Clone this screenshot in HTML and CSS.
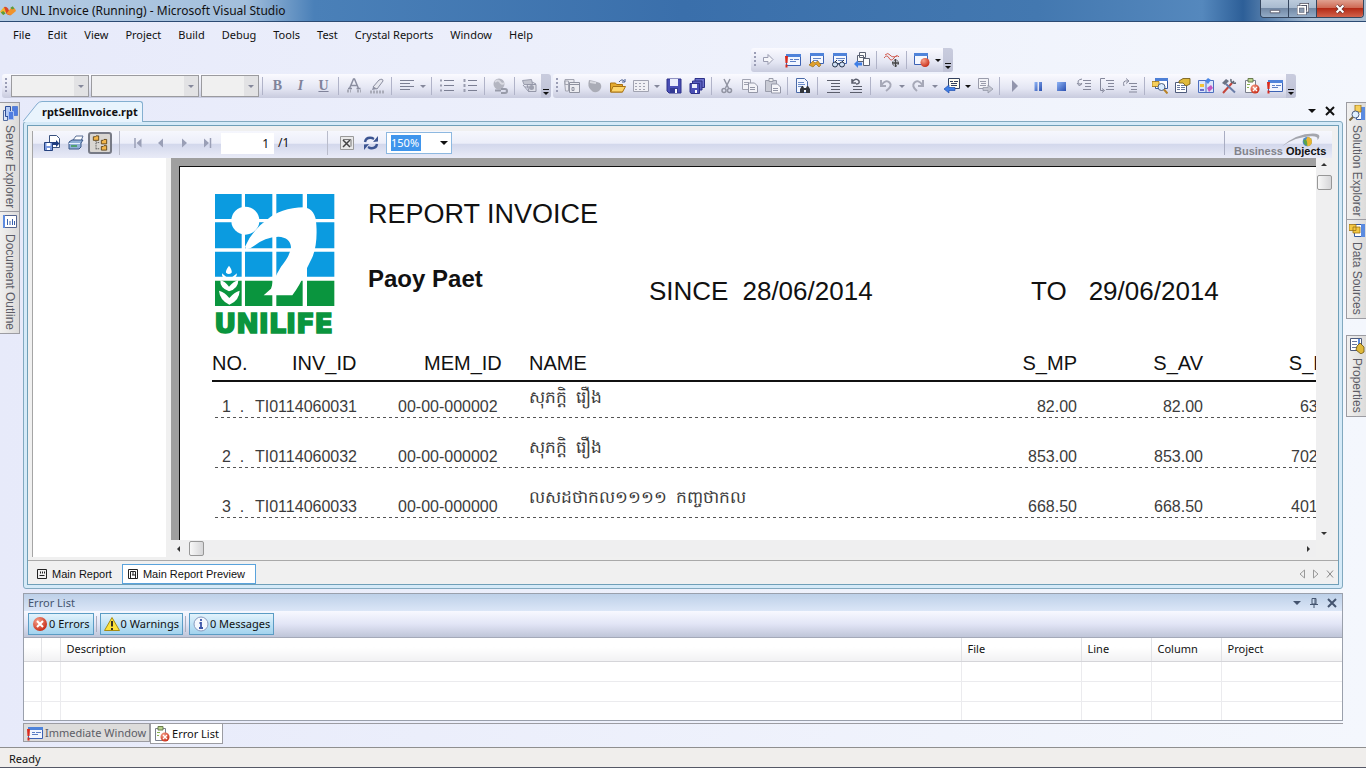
FILE: index.html
```html
<!DOCTYPE html>
<html lang="en">
<head>
    <meta charset="utf-8">
    <title>UNL Invoice (Running) - Microsoft Visual Studio</title>
    <link rel="stylesheet" href="styles.css">
</head>
<body>
    <!-- icon sprite -->
    <svg class="sprite" aria-hidden="true">
        <defs>
            <linearGradient id="gBlue" x1="0" y1="0" x2="1" y2="1"><stop offset="0" stop-color="#8fb4f5"/><stop offset="1" stop-color="#2a4fb0"/></linearGradient>
            <radialGradient id="gRed" cx=".35" cy=".3" r=".8"><stop offset="0" stop-color="#f6a08a"/><stop offset="1" stop-color="#c3220c"/></radialGradient>
        </defs>
        <symbol id="i-fore" viewBox="0 0 16 16"><path d="M1 13h4M11 13h4" stroke="#a9abb8" stroke-width="3" stroke-dasharray="2 1"/><path d="M3.500 10.500L7.500 1h1l4 9.500M5 7.500h6M2 10.500h4M10.500 10.500h4" fill="none" stroke="#8b8ea0" stroke-width="1.500"/></symbol>
        <symbol id="i-pen" viewBox="0 0 16 16"><path d="M1 14h14" stroke="#a9abb8" stroke-width="3" stroke-dasharray="2 1"/><path d="M4 9l6-7q4-2 4 1L8 11z" fill="#e6e7ef" stroke="#8b8ea0"/><path d="M4 9l4 2-5 1z" fill="#8b8ea0"/></symbol>
        <symbol id="i-align" viewBox="0 0 16 16"><path d="M1 2.500h14M1 5.500h10M1 8.500h14M1 11.500h10" stroke="#7b7f93" stroke-width="1"/></symbol>
        <symbol id="i-list" viewBox="0 0 16 16"><path d="M5 2.500h10M5 7.500h10M5 12.500h10" stroke="#7b7f93"/><path d="M1 2.500h2M1 7.500h2M1 12.500h2" stroke="#9a9db0" stroke-width="2"/></symbol>
        <symbol id="i-nums" viewBox="0 0 16 16"><path d="M6 2.500h9M6 7.500h9M6 12.500h9" stroke="#7b7f93"/><path d="M2.500 1v14" stroke="#9a9db0" stroke-width="2" stroke-dasharray="3 2"/></symbol>
        <symbol id="i-globe" viewBox="0 0 16 16"><circle cx="7" cy="6" r="5.500" fill="#b4b6c1"/><path d="M3 4q3-3 5 0t4 1" stroke="#d9dae2" fill="none" stroke-width="2"/><path d="M3 12.500h6M9 11h4a2 2 0 010 4h-4" fill="none" stroke="#989ba9" stroke-width="2"/></symbol>
        <symbol id="i-stack" viewBox="0 0 16 16"><path d="M.5 2.500l9-1 1 5H2z" fill="#c3c5d0" stroke="#9b9eae"/><path d="M1 7l6 7M5 6.500h9v7H7z" fill="#dddfe8" stroke="#9497a8"/><path d="M10 4l4 2M3 9h4" stroke="#9497a8"/><circle cx="9.500" cy="9.500" r="2.500" fill="#9ea1b0"/></symbol>
        <symbol id="i-newproj" viewBox="0 0 16 16"><path d="M1 1.500h9v5H1zM.5 3h4v10h-3z" fill="#e9e9ef" stroke="#a3a5b1"/><path d="M5.500 4.500h10v10h-10zM5.500 6.500h10M8 9.500h2v3H8z" fill="#ececf1" stroke="#8f929f"/></symbol>
        <symbol id="i-ball" viewBox="0 0 16 16"><path d="M2 2l5 1 6 2q3 4-1 8-5 3-8-1-4-3-2-10z" fill="#aaacb6"/><path d="M3 4l6 1" stroke="#d9dae1" stroke-width="2"/></symbol>
        <symbol id="i-open" viewBox="0 0 16 16"><path d="M.5 14V5h5l1 1.500h6V14z" fill="#e4a92d" stroke="#a87212"/><path d="M3 8.500h12.500L12.500 14H.7z" fill="#fdd56b" stroke="#a87212"/><path d="M9 4q3-4 5.500-.5M15 1v3h-3" fill="none" stroke="#44598c"/></symbol>
        <symbol id="i-grid" viewBox="0 0 16 16"><path d="M.5 2.500h15v11H.5z" fill="#f0f0f5" stroke="#a1a3b1"/><path d="M2 5.500h12M2 8.500h12M2 11.500h12" stroke="#a1a3b1" stroke-dasharray="2 2"/></symbol>
        <symbol id="i-save" viewBox="0 0 16 16"><path d="M1 1h14v14H3l-2-2z" fill="#4a4fb5" stroke="#2d3188"/><path d="M4 1h8v7H4z" fill="#e9ecfb"/><path d="M4 10h8v5H4z" fill="#333a94"/><path d="M9 11h2v4H9z" fill="#fff"/></symbol>
        <symbol id="i-saveall" viewBox="0 0 16 16"><path d="M6 .5h9.500v9H6z" fill="#6b70cc" stroke="#2d3188"/><path d="M3.500 3h9.500v9H3.500z" fill="#5a5fc0" stroke="#2d3188"/><path d="M1 5.500h9.500v10H2L1 14z" fill="#4a4fb5" stroke="#2d3188"/><path d="M3 6h5v4H3z" fill="#e9ecfb"/><path d="M6 12h2v3H6z" fill="#fff"/></symbol>
        <symbol id="i-cut" viewBox="0 0 16 16"><path d="M5 1l4.500 9M11 1L6.500 10" stroke="#9194a2" stroke-width="1.500"/><circle cx="5" cy="12.500" r="2" fill="none" stroke="#9194a2" stroke-width="1.500"/><circle cx="10.500" cy="12.500" r="2" fill="none" stroke="#9194a2" stroke-width="1.500"/></symbol>
        <symbol id="i-copy" viewBox="0 0 16 16"><path d="M.5 1.500h8v10h-8zM2 4.500h5M2 6.500h5" fill="#f3f3f8" stroke="#a1a3b1"/><path d="M6.500 5h6l3 3v6.500h-9zM8 9.500h5M8 11.500h5" fill="#f3f3f8" stroke="#9497a7"/></symbol>
        <symbol id="i-paste" viewBox="0 0 16 16"><path d="M.5 2.500h11v11H.5z" fill="#c9cbd5" stroke="#9a9dab"/><path d="M4 .5h4v3H4z" fill="#eee" stroke="#9a9dab"/><path d="M6.500 6h6l3 3v6h-9zM8 10.500h5M8 12.500h5" fill="#f5f5f9" stroke="#9497a7"/></symbol>
        <symbol id="i-find" viewBox="0 0 16 16"><path d="M1.500.5h8l3 3v11h-11z" fill="#f3f7ff" stroke="#4b6aa8"/><path d="M3 4.500h6M3 6.500h7M3 8.500h4" stroke="#6d8cc8"/><path d="M5 15v-4l2-3h1l1 2h2l1-2h1l2 3v4h-4v-3H9v3z" fill="#33363c"/></symbol>
        <symbol id="i-indent" viewBox="0 0 16 16"><path d="M2 2.500h13M6 5.500h9M6 8.500h9M6 11.500h9M2 14.500h13" stroke="#5b5e6c"/></symbol>
        <symbol id="i-uncomm" viewBox="0 0 16 16"><path d="M5 8.500h9M5 11.500h9M2 14.500h12" stroke="#5b5e6c"/><path d="M4 1v4h4M4 4q4-5 7-1 1 3-3 3" fill="none" stroke="#5b5e6c" stroke-width="1.500"/></symbol>
        <symbol id="i-undo" viewBox="0 0 16 16"><path d="M3 2v6h5M3.500 7Q8 1 11.500 4.500T8 13" fill="none" stroke="#a7a9b8" stroke-width="2"/></symbol>
        <symbol id="i-redo" viewBox="0 0 16 16"><path d="M12 2v6H7M11.500 7Q7 1 3.500 4.500T6 13" fill="none" stroke="#a7a9b8" stroke-width="2"/></symbol>
        <symbol id="i-back" viewBox="0 0 16 16"><path d="M4.500.5h11v10h-11z" fill="#fffdf0" stroke="#33415f"/><path d="M6 3.500h3M10 3.500h4M7 5.500h6M7 7.500h6" stroke="#33415f"/><path d="M0 11l5-4v2.500h6v3H5V15z" fill="#3f7fe6" stroke="#1f4faf" stroke-width=".7"/></symbol>
        <symbol id="i-fwd" viewBox="0 0 16 16"><path d="M1.500.5h10v10h-10z" fill="#f2f2f6" stroke="#9a9cab"/><path d="M3 3.500h6M4 5.500h5M3 7.500h6" stroke="#9a9cab"/><path d="M16 11l-5-4v2.500H6v3h5V15z" fill="#c3c5d0" stroke="#8d90a0" stroke-width=".7"/></symbol>
        <symbol id="i-play" viewBox="0 0 16 16"><path d="M5 2l6 6-6 6z" fill="#9295ac"/></symbol>
        <symbol id="i-pause" viewBox="0 0 16 16"><path d="M4.500 4h3v9h-3zM9 4h3v9H9z" fill="url(#gBlue)"/></symbol>
        <symbol id="i-stop" viewBox="0 0 16 16"><path d="M4 4h9v9H4z" fill="url(#gBlue)"/></symbol>
        <symbol id="i-into" viewBox="0 0 16 16"><path d="M7 2.500h8M9 5.500h6M9 8.500h6M7 11.500h8" stroke="#85889b"/><path d="M6 1q-6 1-3 5M1 5l2.500 3L6 5M3 6h3" fill="none" stroke="#85889b"/></symbol>
        <symbol id="i-over" viewBox="0 0 16 16"><path d="M7 2.500h8M9 5.500h6M9 8.500h6M7 11.500h8" stroke="#85889b"/><path d="M6 .5H1.500v12h3M3 10.500l2.500 2-2.500 2" fill="none" stroke="#85889b"/></symbol>
        <symbol id="i-out" viewBox="0 0 16 16"><path d="M7 5.500h8M9 8.500h6M9 11.500h6M7 14h8" stroke="#85889b"/><path d="M2 8Q0 2 6 3M4 .5L7 3 4 5.500" fill="none" stroke="#85889b"/></symbol>
        <symbol id="i-solexp" viewBox="0 0 16 16"><path d="M3.500.5h12v10h-12z" fill="#fff" stroke="#34599f"/><path d="M3 0h13v3H3z" fill="#4d7fd6"/><path d="M0 3.500h7v5H0z" fill="#f6cf5a" stroke="#9d7213" stroke-width=".8"/><circle cx="9.500" cy="9" r="3.500" fill="#d8ecff" stroke="#4d5f80"/><path d="M12 11.500l3.500 4" stroke="#b98327" stroke-width="2"/></symbol>
        <symbol id="i-solside" viewBox="0 0 16 16"><path d="M7.500 2.500h8v12h-8z" fill="#fff" stroke="#34599f"/><path d="M12 2h4v13h-4z" fill="#5b8be0"/><path d="M6 0h6v7H6z" fill="#f6cf5a" stroke="#9d7213" stroke-width=".8"/><circle cx="6.500" cy="9.500" r="3.500" fill="#e0f0ff" stroke="#4d5f80"/><path d="M4 12l-3.500 3.500" stroke="#7d6a3f" stroke-width="2"/></symbol>
        <symbol id="i-props" viewBox="0 0 16 16"><path d="M.5 4.500h11v10H.5z" fill="#fff" stroke="#4e5b7b"/><path d="M2 7.500h3M6 7.500h4M2 9.500h3M6 9.500h4M2 11.500h3M6 11.500h4" stroke="#68779c"/><path d="M4 3l4-2.500h7V6L11 8 8 5H4z" fill="#e0b93b" stroke="#6b5310" stroke-width=".8"/></symbol>
        <symbol id="i-propside" viewBox="0 0 16 16"><path d="M1.500.5h11v12h-11z" fill="#fff" stroke="#4e5b7b"/><path d="M3 3.500h5M3 6.500h5M3 9.500h5" stroke="#68779c"/><path d="M10 1v11" stroke="#5b8be0" stroke-width="2"/><path d="M8 8l3-3 4 4v5l-3 2-5-4z" fill="#e0b93b" stroke="#6b5310" stroke-width=".8"/></symbol>
        <symbol id="i-objb" viewBox="0 0 16 16"><path d="M.5 2.500h15v12H.5z" fill="#dbe6fb" stroke="#4d6fbf"/><path d="M8 3v11" stroke="#4d6fbf"/><path d="M10 0l3 2-3 4-3-3z" fill="#4a86e4"/><path d="M2 6h4v3H2z" fill="#f2c338"/><path d="M9 10l4-3 2 3-4 4z" fill="#c657c0"/><path d="M2 11h4v2H2z" fill="#6a6fc9"/></symbol>
        <symbol id="i-tools" viewBox="0 0 16 16"><path d="M2 15L11 5" stroke="#c4453b" stroke-width="2"/><path d="M10 1q-1 5 5 4M11 5l2-2" stroke="#5a6270" fill="none" stroke-width="1.500"/><path d="M5 6l9 8.500" stroke="#6a7da8" stroke-width="2"/><path d="M1 5l4-4 3 2-4 4z" fill="#6b7384"/></symbol>
        <symbol id="i-errlist" viewBox="0 0 16 16"><path d="M1.500 2.500h10v12h-10z" fill="#fdfdfa" stroke="#7a7f8d"/><path d="M4 .5h5v3.500H4z" fill="#b9d48c" stroke="#6b7c50"/><path d="M3 6.500h3M3 9.500h2" stroke="#88b052"/><circle cx="11" cy="11" r="4.500" fill="url(#gRed)"/><path d="M9 9l4 4M13 9l-4 4" stroke="#fff" stroke-width="1.300"/></symbol>
        <symbol id="i-imm" viewBox="0 0 16 16"><path d="M1.500 2.500h14v11h-14z" fill="#f2f6ff" stroke="#3c62b4"/><path d="M1 2h15v3H1z" fill="#4f83da"/><path d="M5 7.500h3M9 7.500h5M5 9.500h6" stroke="#5c7fc5"/><path d="M0 4h3l-.5 7h-2zM.5 12.500h2v3h-2z" fill="#d92a1c"/></symbol>
        <symbol id="i-win" viewBox="0 0 16 16"><path d="M2.500 1.500h13v10h-13z" fill="#f5f8ff" stroke="#3c62b4"/><path d="M2 1h14v3H2z" fill="#4f83da"/><path d="M5 6.500h8M5 8.500h5" stroke="#6686c5"/><path d="M1 13l4-4 2 2 3-2 3 4-2 2-3-3-3 3z" fill="#e0a02c" stroke="#8a6316" stroke-width=".6"/></symbol>
        <symbol id="i-watch" viewBox="0 0 16 16"><path d="M2.500 1.500h13v10h-13z" fill="#f5f8ff" stroke="#3c62b4"/><path d="M2 1h14v3H2z" fill="#4f83da"/><path d="M5 6.500h9M7 8.500h6" stroke="#6686c5"/><circle cx="4" cy="12.500" r="2.500" fill="#cfe0f5" stroke="#26324a"/><circle cx="11" cy="12.500" r="2.500" fill="#cfe0f5" stroke="#26324a"/><path d="M4 10l2-2M11 10l2-2M6.500 12h2" stroke="#26324a"/></symbol>
        <symbol id="i-callstk" viewBox="0 0 16 16"><path d="M5.500.5h6v5h-6zM9.500 6.500h6v7h-6zM3.500 3.500h6v6h-6z" fill="#fcfcfc" stroke="#5b6274"/><path d="M0 12l4-4v2.500h4v3H4V16z" fill="#3f7fe6"/></symbol>
        <symbol id="i-next" viewBox="0 0 16 16"><path d="M1.500 5.500v4H6v3l5-5-5-5v3z" fill="#f6f6fa" stroke="#9a9cb0"/></symbol>
        <symbol id="i-wave" viewBox="0 0 16 16"><path d="M0 6q3-4 5 0t5 0 5-1M1 3q3-3 5 0t7 1" fill="none" stroke="#d0574b"/><circle cx="11.500" cy="11" r="3" fill="none" stroke="#444" stroke-dasharray="2 1"/><path d="M11.500 7v8M8 11h7" stroke="#444" stroke-width="1.500"/></symbol>
        <symbol id="i-brk" viewBox="0 0 16 16"><path d="M.5 1.500h13v11H.5z" fill="#f5f8ff" stroke="#3c62b4"/><path d="M0 1h14v3H0z" fill="#4f83da"/><circle cx="11" cy="10.500" r="4.500" fill="url(#gRed)"/></symbol>
        <symbol id="i-servers" viewBox="0 0 16 16"><path d="M1.500 5.500h4v10h-4z" fill="#dce6f8" stroke="#516b9f"/><path d="M3.500 1.500h5v10h-5z" fill="#b4cbf5" stroke="#2c4c97"/><path d="M10.500 1.500h5v9h-5z" fill="#4f7ce0" stroke="#5b80d0"/><path d="M6.500 6.500h5v8h-5z" fill="#4f7ce0" stroke="#a9c1f2"/></symbol>
        <symbol id="i-outline" viewBox="0 0 16 16"><path d="M1.500 1.500h13v12h-13z" fill="#fff" stroke="#55658f"/><path d="M1 1h2v13H1z" fill="#5d8be0"/><path d="M5.500 5v6M8 7v4M10.500 5v6M12.500 7v4" stroke="#3a62ad"/></symbol>
        <symbol id="i-dsrc" viewBox="0 0 16 16"><path d="M5.500 2.500h10v12h-10z" fill="#fff" stroke="#34599f"/><path d="M12 2h4v13h-4z" fill="#5b8be0"/><path d="M0 2.500h7v6H0zM4 5h7v6H4z" fill="#f3c843" stroke="#9d7213" stroke-width=".8"/></symbol>
        <symbol id="i-export" viewBox="0 0 16 16"><path d="M5.500.5h7l3 3v9h-10z" fill="#fff" stroke="#39527f"/><path d="M8 7h4V5l3.500 3.500L12 12v-2H8z" fill="#1e3c80"/><path d="M.5 7.500h8v8h-8z" fill="#7c9be0" stroke="#24417e"/><path d="M2.500 8h4v3h-4z" fill="#fff"/><path d="M3 13h3v2H3z" fill="#fff"/></symbol>
        <symbol id="i-print" viewBox="0 0 16 16"><path d="M5 5l3-4h7l-2 5z" fill="#fff" stroke="#5a6f96"/><path d="M1 7l3-2h11l-2 3v4l-2 2H1z" fill="#8fb0d8" stroke="#3a5687"/><path d="M1 8.500h11" stroke="#e7f1ff"/><path d="M3 11h6" stroke="#3b9a52" stroke-width="1.500"/></symbol>
        <symbol id="i-tree" viewBox="0 0 18 18"><path d="M4.500 7v9M5 8.500h4M5 15.500h4" stroke="#333" stroke-dasharray="1 1"/><path d="M1.500 2h2l1-1h3v5h-6zM10.500 6h2l1-1h3v5h-6zM10.500 13h2l1-1h3v5h-6z" fill="#f2b64c" stroke="#5b4013"/></symbol>
        <symbol id="i-first" viewBox="0 0 16 16"><path d="M4 3v10" stroke="#9a9fb6" stroke-width="1.500"/><path d="M10.500 3.500v9L5.500 8z" fill="#9a9fb6"/></symbol>
        <symbol id="i-prev" viewBox="0 0 16 16"><path d="M9 3.500v9L4 8z" fill="#9a9fb6"/></symbol>
        <symbol id="i-nextp" viewBox="0 0 16 16"><path d="M5 3.500v9L10 8z" fill="#9a9fb6"/></symbol>
        <symbol id="i-last" viewBox="0 0 16 16"><path d="M10.500 3v10" stroke="#9a9fb6" stroke-width="1.500"/><path d="M4 3.500v9l5-4.500z" fill="#9a9fb6"/></symbol>
        <symbol id="i-closev" viewBox="0 0 16 16"><path d="M1.500 1.500h13v13h-13z" fill="#e9e9e9" stroke="#999"/><path d="M4 5l7 7M11 5l-7 7" stroke="#444" stroke-width="1.500"/><path d="M4 4.500h8v7" fill="none" stroke="#777"/></symbol>
        <symbol id="i-refresh" viewBox="0 0 16 16"><path d="M2 7Q3 2 9 3l2 1M14 9q-1 5-7 4l-2-1" fill="none" stroke="#3c5591" stroke-width="2.500"/><path d="M10 7l5-.5V1zM6 9l-5 .5V15z" fill="#3c5591"/></symbol>
        <symbol id="i-design" viewBox="0 0 10 10"><path d="M.5.5h9v9h-9zM3.500 2.500v2M5.500 2.500v2M7.500 2.500v2M2.500 6.500h5" fill="none" stroke="#222"/></symbol>
        <symbol id="i-preview" viewBox="0 0 10 10"><path d="M.5.5h9v9h-9zM2.500 9V2.500h5V9M5 3v3M4 6h3" fill="none" stroke="#222"/></symbol>
        <symbol id="i-x" viewBox="0 0 10 10"><path d="M1 1l8 8M9 1L1 9" fill="none" stroke="currentColor" stroke-width="2"/></symbol>
        <symbol id="i-xthin" viewBox="0 0 10 10"><path d="M2 1.500l6 7M8 1.500l-6 7" fill="none" stroke="currentColor"/></symbol>
        <symbol id="i-pin" viewBox="0 0 10 10"><path d="M3 .5h4V6H3zM6 1v5M1 6.500h8M5 7v3" fill="none" stroke="currentColor"/></symbol>
    </svg>

    <header class="titlebar">
        <svg class="vs-logo" viewBox="0 0 20 16"><path d="M0 9l5-6q3 0 5 3l-6 7z" fill="#f2b52c"/><path d="M5 3q3-1 5 2l4 8q-4 1-6-2z" fill="#d8442a"/><path d="M8 11l6-7q5-1 6 4l-6 5q-3 0-6-2z" fill="#f0932b"/><path d="M1 10l3-2 3 3-3 2zM13 4l3-2 2 3-3 1z" fill="#5a9c3d"/></svg>
        <h1>UNL Invoice (Running) - Microsoft Visual Studio</h1>
        <div class="win-buttons">
            <button class="win-min" aria-label="Minimize"><svg viewBox="0 0 14 14"><path d="M1.500 8.500h11v3h-11z" fill="#fff" stroke="#556"/></svg></button>
            <button class="win-restore" aria-label="Restore"><svg viewBox="0 0 14 14"><path d="M4.500 1.500h8v8h-8z" fill="#8c9bb0" stroke="#445" stroke-width="3"/><path d="M4.500 1.500h8v8h-8z" fill="none" stroke="#fff" stroke-width="1.500"/><path d="M1.500 4.500h8v8h-8z" fill="#8c9bb0" stroke="#445" stroke-width="3"/><path d="M1.500 4.500h8v8h-8z" fill="none" stroke="#fff" stroke-width="2"/></svg></button>
            <button class="win-close" aria-label="Close"><svg viewBox="0 0 14 14"><path d="M3 3l8 8M11 3l-8 8" stroke="#603030" stroke-width="4"/><path d="M3 3l8 8M11 3l-8 8" stroke="#fff" stroke-width="2.500"/></svg></button>
        </div>
    </header>

    <nav class="menubar">
        <a href="#">File</a>
        <a href="#">Edit</a>
        <a href="#">View</a>
        <a href="#">Project</a>
        <a href="#">Build</a>
        <a href="#">Debug</a>
        <a href="#">Tools</a>
        <a href="#">Test</a>
        <a href="#">Crystal Reports</a>
        <a href="#">Window</a>
        <a href="#">Help</a>
    </nav>

    <div class="toolbar-row debug-row">
        <div class="toolbar">
            <span class="grip"></span>
            <button aria-label="Show Next Statement"><svg><use href="#i-next"/></svg></button>
            <button aria-label="Immediate"><svg><use href="#i-imm"/></svg></button>
            <button aria-label="Locals"><svg><use href="#i-win"/></svg></button>
            <button aria-label="Watch"><svg><use href="#i-watch"/></svg></button>
            <button aria-label="Call Stack"><svg><use href="#i-callstk"/></svg></button>
            <span class="sep"></span>
            <button aria-label="Threads"><svg><use href="#i-wave"/></svg></button>
            <span class="sep"></span>
            <button aria-label="Breakpoints"><svg><use href="#i-brk"/></svg></button>
            <button class="drop on" aria-label="More windows"></button>
            <button class="overflow" aria-label="Toolbar options"></button>
        </div>
    </div>

    <div class="toolbar-row">
        <div class="toolbar">
            <span class="grip"></span>
            <div class="combo combo-s"><select disabled aria-label="Target rule"></select></div>
            <div class="combo combo-l"><select disabled aria-label="Font name"></select></div>
            <div class="combo combo-xs"><select disabled aria-label="Font size"></select></div>
            <span class="sep"></span>
            <button class="fmt" disabled><b>B</b></button>
            <button class="fmt" disabled><i>I</i></button>
            <button class="fmt" disabled><u>U</u></button>
            <span class="sep"></span>
            <button aria-label="Foreground color"><svg><use href="#i-fore"/></svg></button>
            <button aria-label="Background color"><svg><use href="#i-pen"/></svg></button>
            <span class="sep"></span>
            <button aria-label="Align"><svg><use href="#i-align"/></svg></button>
            <button class="drop" aria-label="Align options"></button>
            <span class="sep"></span>
            <button aria-label="Bullets"><svg><use href="#i-list"/></svg></button>
            <button aria-label="Numbering"><svg><use href="#i-nums"/></svg></button>
            <span class="sep"></span>
            <button aria-label="Hyperlink"><svg><use href="#i-globe"/></svg></button>
            <span class="sep"></span>
            <button aria-label="Style"><svg><use href="#i-stack"/></svg></button>
            <button class="overflow" aria-label="Toolbar options"></button>
        </div>
        <div class="toolbar">
            <span class="grip"></span>
            <button aria-label="New Project"><svg><use href="#i-newproj"/></svg></button>
            <button aria-label="New Web Site"><svg><use href="#i-ball"/></svg></button>
            <button aria-label="Open File"><svg><use href="#i-open"/></svg></button>
            <button aria-label="Add New Item"><svg><use href="#i-grid"/></svg></button>
            <button class="drop" aria-label="Add options"></button>
            <button aria-label="Save"><svg><use href="#i-save"/></svg></button>
            <button aria-label="Save All"><svg><use href="#i-saveall"/></svg></button>
            <span class="sep"></span>
            <button aria-label="Cut"><svg><use href="#i-cut"/></svg></button>
            <button aria-label="Copy"><svg><use href="#i-copy"/></svg></button>
            <button aria-label="Paste"><svg><use href="#i-paste"/></svg></button>
            <span class="sep"></span>
            <button aria-label="Find"><svg><use href="#i-find"/></svg></button>
            <span class="sep"></span>
            <button aria-label="Comment"><svg><use href="#i-indent"/></svg></button>
            <button aria-label="Uncomment"><svg><use href="#i-uncomm"/></svg></button>
            <span class="sep"></span>
            <button aria-label="Undo"><svg><use href="#i-undo"/></svg></button>
            <button class="drop" aria-label="Undo list"></button>
            <button aria-label="Redo"><svg><use href="#i-redo"/></svg></button>
            <button class="drop" aria-label="Redo list"></button>
            <button aria-label="Navigate Backward"><svg><use href="#i-back"/></svg></button>
            <button class="drop on" aria-label="Navigate list"></button>
            <button aria-label="Navigate Forward"><svg><use href="#i-fwd"/></svg></button>
            <span class="sep"></span>
            <button aria-label="Continue"><svg><use href="#i-play"/></svg></button>
            <button aria-label="Break All"><svg><use href="#i-pause"/></svg></button>
            <button aria-label="Stop"><svg><use href="#i-stop"/></svg></button>
            <button aria-label="Step Into"><svg><use href="#i-into"/></svg></button>
            <button aria-label="Step Over"><svg><use href="#i-over"/></svg></button>
            <button aria-label="Step Out"><svg><use href="#i-out"/></svg></button>
            <span class="sep"></span>
            <button aria-label="Solution Explorer"><svg><use href="#i-solexp"/></svg></button>
            <button aria-label="Properties"><svg><use href="#i-props"/></svg></button>
            <button aria-label="Object Browser"><svg><use href="#i-objb"/></svg></button>
            <button aria-label="Toolbox"><svg><use href="#i-tools"/></svg></button>
            <button aria-label="Error List"><svg><use href="#i-errlist"/></svg></button>
            <button aria-label="Immediate Window"><svg><use href="#i-imm"/></svg></button>
            <button class="overflow" aria-label="Toolbar options"></button>
        </div>
    </div>

    <div class="workspace">
        <aside class="dock dock-left">
            <button><svg><use href="#i-servers"/></svg>Server Explorer</button>
            <button><svg><use href="#i-outline"/></svg>Document Outline</button>
        </aside>

        <main class="center">
            <div class="doc-tabs">
                <button class="doc-tab">
                    <svg class="slant" viewBox="0 0 19 21"><path d="M0 21L15 3Q17 0 19 0V21z" fill="#e9f4fd"/><path d="M0 20.500L14 3Q16 .5 19 .5" fill="none" stroke="#84afd0"/></svg>
                    <span>rptSellInvoice.rpt</span>
                </button>
                <div class="doc-actions">
                    <button class="caret" aria-label="Active files"></button>
                    <button aria-label="Close"><svg><use href="#i-x"/></svg></button>
                </div>
            </div>

            <section class="doc-frame">
                <div class="doc-inner">
                    <div class="viewer">
                        <div class="viewer-bar">
                            <button aria-label="Export"><svg><use href="#i-export"/></svg></button>
                            <button aria-label="Print"><svg><use href="#i-print"/></svg></button>
                            <button class="pressed" aria-label="Group tree"><svg><use href="#i-tree"/></svg></button>
                            <span class="vsep"></span>
                            <button class="nav" aria-label="First page"><svg><use href="#i-first"/></svg></button>
                            <button class="nav" aria-label="Previous page"><svg><use href="#i-prev"/></svg></button>
                            <button class="nav" aria-label="Next page"><svg><use href="#i-nextp"/></svg></button>
                            <button class="nav" aria-label="Last page"><svg><use href="#i-last"/></svg></button>
                            <input class="page-no" type="text" value="1" aria-label="Page">
                            <span class="page-total">/1</span>
                            <span class="vsep"></span>
                            <button aria-label="Close view"><svg><use href="#i-closev"/></svg></button>
                            <button aria-label="Refresh"><svg><use href="#i-refresh"/></svg></button>
                            <div class="zoom-box">
                                <input type="text" value="150%" aria-label="Zoom">
                                <button class="caret" aria-label="Zoom levels"></button>
                            </div>
                            <div class="bo-logo">
                                <svg viewBox="0 0 60 21"><path d="M0 20Q24-1 51 1q9 2 2 10 2-7-10-6Q20 6 0 20z" fill="#a4a6ae"/><circle cx="38" cy="13" r="7" fill="#4a88c8"/><path d="M38 6a7 7 0 010 14q-5-5 0-14z" fill="#e8b530"/><path d="M32 11q6-5 6 8-5 0-6-8z" fill="#5aa54a"/></svg>
                                <span><i>Business</i> Objects</span>
                            </div>
                        </div>

                        <div class="viewer-body">
                            <div class="group-tree"></div>
                            <div class="scroller">
                                <div class="canvas">
                                    <article class="page">
                                        <div class="report-head">
                                            <svg class="unilife" viewBox="0 0 360 426">
                                                <path fill="#0b9be0" d="M0 0h80v75H0zM90 0h82v75H90zM184 0h79v75h-79zM276 0h82v75h-82zM0 85h80v78H0zM90 85h82v78H90zM184 85h79v78h-79zM276 85h82v78h-82zM0 173h80v75H0zM90 173h82v75H90zM184 173h79v75h-79zM276 173h82v75h-82z"/>
                                                <path fill="#0a953e" d="M0 260h80v76H0zM90 260h82v76H90zM184 260h79v76h-79zM276 260h82v76h-82z"/>
                                                <g fill="#fff">
                                                    <circle cx="91" cy="80" r="42"/>
                                                    <path d="M94 166L90 158Q112 108 155 78 195 42 268 40 302 46 304 92 308 150 292 190 276 222 263 250 257 270 232 304H146L168 284Q176 254 198 218 226 184 228 160 226 130 190 128 148 130 120 154 108 164 94 166z"/>
                                                    <path d="M42 215q-11 15-9 21 8 8 17 0 2-8-8-21zM21 238q-2 16 21 18 24-2 24-18l-13 10q-11 6-20 0zM16 258q-2 24 26 34 28-8 28-34-14 4-28 20-12-16-26-20zM12 290q2 28 31 42 30-12 31-42-16 4-31 22-14-18-31-22z"/>
                                                </g>
                                                <text x="-2" y="417">UNILIFE</text>
                                            </svg>
                                            <div class="report-title">
                                                <h2>REPORT INVOICE</h2>
                                                <h3>Paoy Paet</h3>
                                            </div>
                                            <div class="report-date since"><span>SINCE</span><span>28/06/2014</span></div>
                                            <div class="report-date to"><span>TO</span><span>29/06/2014</span></div>
                                        </div>

                                        <table class="report">
                                            <colgroup>
                                                <col class="c-no"><col class="c-inv"><col class="c-mem"><col class="c-name"><col class="c-mp"><col class="c-av"><col class="c-bv">
                                            </colgroup>
                                            <thead>
                                                <tr><th>NO.</th><th class="mid">INV_ID</th><th class="mem">MEM_ID</th><th>NAME</th><th class="num">S_MP</th><th class="num">S_AV</th><th class="num">S_BV</th></tr>
                                            </thead>
                                            <tbody>
                                                <tr><td class="no">1&nbsp; .</td><td>TI0114060031</td><td>00-00-000002</td><td class="name">សុភក្តិ&nbsp; រឿង</td><td class="num">82.00</td><td class="num">82.00</td><td class="num">63.00</td></tr>
                                                <tr><td class="no">2&nbsp; .</td><td>TI0114060032</td><td>00-00-000002</td><td class="name">សុភក្តិ&nbsp; រឿង</td><td class="num">853.00</td><td class="num">853.00</td><td class="num">702.00</td></tr>
                                                <tr><td class="no">3&nbsp; .</td><td>TI0114060033</td><td>00-00-000000</td><td class="name">លសដថាកល១១១១&nbsp; កញ្ចថាកល</td><td class="num">668.50</td><td class="num">668.50</td><td class="num">401.00</td></tr>
                                            </tbody>
                                        </table>
                                    </article>
                                </div>
                                <div class="vscroll"><span class="arr up"></span><span class="thumb"></span><span class="arr down"></span></div>
                                <div class="hscroll"><span class="arr left"></span><span class="thumb"></span><span class="arr right"></span></div>
                            </div>
                        </div>
                    </div>

                    <div class="view-tabs">
                        <button><svg><use href="#i-design"/></svg>Main Report</button>
                        <button class="active"><svg><use href="#i-preview"/></svg>Main Report Preview</button>
                        <div class="view-nav">
                            <svg viewBox="0 0 8 10"><path d="M6.500 1v8L2 5z" fill="none" stroke="#999"/></svg>
                            <svg viewBox="0 0 8 10"><path d="M1.500 1v8L6 5z" fill="none" stroke="#999"/></svg>
                            <svg viewBox="0 0 10 10"><use href="#i-xthin"/></svg>
                        </div>
                    </div>
                </div>
            </section>

            <section class="errors">
                <div class="errors-title">
                    <h2>Error List</h2>
                    <button class="caret" aria-label="Window position"></button>
                    <button aria-label="Auto Hide"><svg><use href="#i-pin"/></svg></button>
                    <button aria-label="Close"><svg><use href="#i-x"/></svg></button>
                </div>
                <div class="errors-bar">
                    <button><svg viewBox="0 0 16 16"><circle cx="8" cy="8" r="7" fill="url(#gRed)"/><path d="M5 5l6 6M11 5l-6 6" stroke="#fff" stroke-width="2"/></svg>0 Errors</button>
                    <span></span>
                    <button><svg viewBox="0 0 16 16"><path d="M8 1.500l7.500 13H.5z" fill="#fce23a" stroke="#a78b12"/><path d="M8 5v5.500M8 12v2" stroke="#222" stroke-width="1.800"/></svg>0 Warnings</button>
                    <span></span>
                    <button><svg viewBox="0 0 16 16"><circle cx="8" cy="8" r="7" fill="#f3f7fd" stroke="#8a9cc0"/><path d="M8 3v2M6.500 7H8v5M6 12h4" fill="none" stroke="#3d55a8" stroke-width="1.800"/></svg>0 Messages</button>
                </div>
                <table class="error-table">
                    <colgroup><col class="e-a"><col class="e-b"><col><col class="e-file"><col class="e-line"><col class="e-line"><col class="e-proj"></colgroup>
                    <thead><tr><th></th><th></th><th>Description</th><th>File</th><th>Line</th><th>Column</th><th>Project</th></tr></thead>
                    <tbody>
                        <tr><td></td><td></td><td></td><td></td><td></td><td></td><td></td></tr>
                        <tr><td></td><td></td><td></td><td></td><td></td><td></td><td></td></tr>
                        <tr><td></td><td></td><td></td><td></td><td></td><td></td><td></td></tr>
                    </tbody>
                </table>
            </section>

            <div class="tool-tabs">
                <button><svg><use href="#i-imm"/></svg>Immediate Window</button>
                <button class="active"><svg><use href="#i-errlist"/></svg>Error List</button>
            </div>
        </main>

        <aside class="dock dock-right">
            <button><svg><use href="#i-solside"/></svg>Solution Explorer</button>
            <button><svg><use href="#i-dsrc"/></svg>Data Sources</button>
            <button class="apart"><svg><use href="#i-propside"/></svg>Properties</button>
        </aside>
    </div>

    <footer class="statusbar">Ready</footer>
</body>
</html>
```
FILE: styles.css
```css
* {
    box-sizing: border-box;
}
body {
    margin: 0;
    height: 100vh;
    overflow: hidden;
    display: flex;
    flex-direction: column;
    font-family: "Noto Sans", "Open Sans", sans-serif;
    font-size: 11px;
    line-height: 16px;
    color: #111;
    background: linear-gradient(to right, #e7eafa, #f4f7fd);
}
h1, h2, h3 {
    margin: 0;
    font-size: 11px;
    font-weight: normal;
}
button, input, select {
    font: inherit;
    color: inherit;
    margin: 0;
    padding: 0;
    border: 0;
    background: none;
}
svg {
    display: block;
    flex: none;
}
.sprite {
    position: absolute;
    width: 0;
    height: 0;
}

/* title bar */
.titlebar {
    display: flex;
    align-items: center;
    height: 22px;
    flex: none;
    border-bottom: 1px solid #2b4a73;
    background: linear-gradient(to right, #b5cce4 0, #a3bfdc 18%, #4a80b8 23%, #3a6fab 50%, #4378b0 76%, #5588bd 88%, #2d5f98 91%, #a9bdd2 96%);
}
.vs-logo {
    width: 16px;
    height: 14px;
    margin-right: 5px;
}
.titlebar h1 {
    flex: 1;
    font-size: 12px;
}
.win-buttons {
    display: flex;
    align-self: flex-start;
    height: 18px;
    margin-right: 2px;
    border: 1px solid #35465e;
    border-top: 0;
    border-radius: 0 0 4px 4px;
    overflow: hidden;
}
.win-buttons button {
    display: flex;
    justify-content: center;
    align-items: center;
    width: 28px;
    border-right: 1px solid #35465e;
    background: linear-gradient(#bccbdc 0, #a9bbd0 45%, #7389a5 50%, #93abc6);
}
.win-buttons svg {
    width: 12px;
    height: 12px;
}
.win-buttons .win-close {
    width: 46px;
    border-right: 0;
    background: linear-gradient(#e0a08f 0, #cf6a55 45%, #b42a16 50%, #d2624b);
}

/* menu */
.menubar {
    display: flex;
    align-items: center;
    gap: 1px;
    height: 26px;
    flex: none;
    padding-left: 5px;
}
.menubar a {
    padding: 0 8px;
    color: #111;
    text-decoration: none;
}

/* toolbars */
.toolbar-row {
    display: flex;
    flex: none;
    gap: 2px;
    height: 26px;
    padding: 0 0 0 2px;
}
.debug-row {
    padding-left: 55%;
}
.toolbar {
    display: flex;
    align-items: center;
    height: 24px;
    border-radius: 3px;
    background: linear-gradient(#fafaff, #e4e6f3 60%, #c8cbde);
}
.toolbar button {
    display: flex;
    justify-content: center;
    align-items: center;
    width: 23px;
    height: 22px;
}
.toolbar svg {
    width: 16px;
    height: 16px;
}
.grip {
    width: 2px;
    height: 16px;
    margin: 0 2px 0 3px;
    background: repeating-linear-gradient(#9a9db5 0, #9a9db5 2px, transparent 2px, transparent 4px);
}
.combo-s {
    margin-left: 2px;
}
.sep {
    width: 1px;
    height: 18px;
    margin: 0 3px;
    background: #b0b3c8;
}
.toolbar .drop {
    width: 10px;
}
.drop::before, .caret::before, .combo::after {
    content: "";
    border: 3px solid transparent;
    border-bottom: 0;
    border-top-color: #85889b;
}
.drop.on::before {
    border-top-color: #111;
}
.toolbar .overflow {
    align-self: stretch;
    flex-direction: column;
    justify-content: flex-end;
    width: 10px;
    height: 24px;
    padding-bottom: 3px;
    gap: 2px;
    border-radius: 0 3px 3px 0;
    background: linear-gradient(#c9ccde, #bfc2d6);
}
.overflow::before {
    content: "";
    width: 6px;
    height: 1px;
    background: #111;
}
.overflow::after {
    content: "";
    border: 3px solid transparent;
    border-bottom: 0;
    border-top-color: #111;
}
.combo {
    position: relative;
    display: flex;
    height: 22px;
    margin-right: 2px;
    border: 1px solid #9b9b9f;
    background: linear-gradient(to left, #e2e2e4 14px, #f0f0f0 14px);
}
.combo select {
    width: 100%;
    appearance: none;
}
.combo::after {
    position: absolute;
    right: 4px;
    top: 9px;
}
.combo-s {
    width: 78px;
}
.combo-l {
    width: 108px;
}
.combo-xs {
    width: 58px;
    margin-right: 0;
}
.fmt {
    font-family: "Liberation Serif", serif;
    font-size: 14px;
    font-weight: bold;
    color: #80839a;
}

/* workspace */
.workspace {
    flex: 1;
    min-height: 0;
    display: flex;
    gap: 3px;
    padding-top: 1px;
}
.dock {
    width: 20px;
    flex: none;
    padding-top: 1px;
}
.dock button {
    display: flex;
    align-items: center;
    gap: 4px;
    width: 20px;
    padding: 2px 0 3px;
    border: 1px solid #9c9ca2;
    writing-mode: vertical-rl;
    font-family: "Liberation Sans", Arial, sans-serif;
    font-size: 12px;
    color: #5c5c66;
    background: linear-gradient(to right, #f1f0ef, #dcdbda);
}
.dock button + button {
    border-top: 0;
}
.dock-left button {
    border-left: 0;
}
.dock-right button {
    border-right: 0;
}
.dock .apart {
    margin-top: 16px;
    border-top: 1px solid #9c9ca2;
}
.dock svg {
    width: 16px;
    height: 16px;
}
.center {
    flex: 1;
    min-width: 0;
    display: flex;
    flex-direction: column;
}
.doc-tabs {
    display: flex;
    justify-content: space-between;
    height: 20px;
    flex: none;
}
.doc-tab {
    display: flex;
    height: 21px;
    position: relative;
}
.slant {
    width: 19px;
    height: 21px;
}
.doc-tab span {
    height: 21px;
    padding-right: 4px;
    border: 1px solid #84afd0;
    border-width: 1px 1px 0 0;
    border-radius: 0 3px 0 0;
    font-weight: bold;
    line-height: 19px;
    background: #e9f4fd;
}
.doc-actions {
    display: flex;
    align-items: center;
    gap: 9px;
    padding-right: 8px;
}
.doc-actions svg {
    width: 10px;
    height: 10px;
}
.caret {
    display: flex;
}
.caret::before {
    border-width: 4px;
    border-bottom: 0;
    border-top-color: #111;
}
.doc-frame {
    flex: 1;
    min-height: 0;
    display: flex;
    padding: 3px;
    border: 1px solid #82a9bf;
    border-radius: 3px;
    background: #d5eaf8;
}
.doc-inner {
    flex: 1;
    min-width: 0;
    display: flex;
    flex-direction: column;
    border: 1px solid #6f9fb8;
    background: #f0f0f0;
}
.viewer {
    flex: 1;
    min-height: 0;
    display: flex;
    flex-direction: column;
    margin: 5px 6px 3px 4px;
    border-left: 1px solid #a5a5a5;
}

/* report viewer toolbar */
.viewer-bar {
    display: flex;
    align-items: center;
    height: 27px;
    flex: none;
    padding: 0 0 3px 7px;
    background: linear-gradient(#f6f7fd 0, #eceef9 45%, #d3d8ec 50%, #e9ebf7);
}
.viewer-bar button {
    display: flex;
    justify-content: center;
    align-items: center;
    width: 24px;
    height: 22px;
}
.viewer-bar .nav {
    width: 23px;
}
.viewer-bar svg {
    width: 16px;
    height: 16px;
}
.viewer-bar .pressed {
    border: 2px solid #777a85;
    border-radius: 3px;
    background: #d9d6d2;
}
.vsep {
    width: 1px;
    height: 24px;
    margin: 0 7px;
    background: #b9bccb;
}
.page-no {
    width: 53px;
    height: 21px;
    margin-left: 2px;
    padding-right: 5px;
    text-align: right;
    font-size: 12px;
    background: #fff;
}
.page-total {
    width: 46px;
    padding-left: 4px;
    font-size: 12px;
}
.zoom-box {
    display: flex;
    align-items: center;
    justify-content: space-between;
    width: 66px;
    height: 22px;
    margin-left: 3px;
    padding: 0 0 0 4px;
    border: 1px solid #8db8e0;
    background: #fff;
}
.zoom-box input {
    width: 30px;
    height: 16px;
    color: #fff;
    background: #3f95ec;
}
.viewer-bar .zoom-box button {
    width: 14px;
}
.bo-logo {
    position: relative;
    align-self: stretch;
    display: flex;
    align-items: flex-end;
    width: 108px;
    margin-left: auto;
    padding-left: 9px;
    border-left: 1px solid #a9adc2;
    font-family: "Liberation Sans", Arial, sans-serif;
    font-size: 11px;
    font-weight: bold;
    line-height: 8px;
    white-space: nowrap;
}
.bo-logo i {
    font-style: normal;
    color: #82838b;
}
.bo-logo svg {
    position: absolute;
    top: 2px;
    right: 10px;
    width: 40px;
    height: 14px;
}

/* report canvas */
.viewer-body {
    flex: 1;
    min-height: 0;
    display: flex;
    gap: 5px;
}
.group-tree {
    width: 133px;
    background: #fff;
}
.scroller {
    flex: 1;
    min-width: 0;
    display: grid;
    grid-template: minmax(0, 1fr) 17px / minmax(0, 1fr) 16px;
}
.canvas {
    overflow: hidden;
    padding: 8px 0 0 8px;
    background: #9f9f9f;
}
.page {
    width: 1240px;
    min-height: 100%;
    padding: 27px 0 0 32px;
    border: 1px solid #111;
    border-bottom: 0;
    font-family: "Liberation Sans", Arial, sans-serif;
    background: #fff;
}
.report-head {
    display: flex;
    height: 152px;
    padding-left: 3px;
}
.unilife {
    width: 120px;
    height: 142px;
    overflow: visible;
}
.unilife text {
    font: bold 81px "DejaVu Sans", sans-serif;
    fill: #0a953e;
    stroke: #0a953e;
    stroke-width: 5px;
}
.report-title {
    width: 281px;
    margin-left: 33px;
    padding-top: 5px;
}
.report-title h2 {
    font-size: 27px;
    line-height: 30px;
}
.report-title h3 {
    margin-top: 35px;
    font-size: 24px;
    font-weight: bold;
    line-height: 30px;
}
.report-date {
    display: flex;
    gap: 14px;
    padding-top: 82px;
    font-size: 26px;
    line-height: 30px;
}
.since {
    width: 382px;
}
.to {
    gap: 22px;
}
.report {
    table-layout: fixed;
    width: 1128px;
    border-collapse: collapse;
    line-height: 20px;
}
.report th, .report td {
    padding: 0;
    text-align: left;
}
.report th {
    height: 35px;
    font-size: 20px;
    font-weight: normal;
    border-bottom: 2px solid #111;
}
.report .mid {
    padding-left: 37px;
}
.report .mem {
    padding-left: 26px;
}
.report tbody tr {
    height: 50px;
    background: repeating-linear-gradient(to right, #555 0, #555 3px, transparent 3px, transparent 6px) 3px 100% / 100% 1px no-repeat;
}
.report tbody tr:first-child {
    height: 37px;
}
.report td {
    padding-bottom: 1px;
    font-size: 16px;
    color: #3c3c3c;
    vertical-align: bottom;
}
.report .no {
    padding-left: 10px;
}
.report .name {
    padding-bottom: 10px;
    font-size: 17px;
    white-space: nowrap;
}
.report .num {
    text-align: right;
}
.c-no {
    width: 43px;
}
.c-inv {
    width: 143px;
}
.c-mem {
    width: 131px;
}
.c-name {
    width: 420px;
}
.c-mp {
    width: 128px;
}
.c-av {
    width: 126px;
}
.c-bv {
    width: 137px;
}

/* scrollbars */
.vscroll, .hscroll {
    display: flex;
    align-items: center;
    background: #efeff0;
}
.vscroll {
    flex-direction: column;
    padding: 5px 0;
}
.hscroll {
    padding: 0 6px;
}
.thumb {
    width: 15px;
    height: 15px;
    border: 1px solid #979797;
    border-radius: 2px;
    background: linear-gradient(to right, #f8f8f8, #d6d6d8);
}
.vscroll .thumb {
    margin: 9px 0 auto;
}
.hscroll .thumb {
    margin: 0 auto 0 9px;
}
.arr {
    border: 3px solid transparent;
}
.up {
    border-top: 0;
    border-bottom-color: #333;
}
.down {
    border-bottom: 0;
    border-top-color: #333;
}
.left {
    border-left: 0;
    border-right-color: #333;
}
.right {
    border-right: 0;
    border-left-color: #333;
}

/* designer / preview tabs */
.view-tabs {
    display: flex;
    align-items: center;
    height: 24px;
    flex: none;
    padding: 2px 0 0 4px;
    border-top: 1px solid #a9a9a9;
    font-family: "Liberation Sans", Arial, sans-serif;
}
.view-tabs button {
    display: flex;
    align-items: center;
    gap: 5px;
    height: 20px;
    padding: 0 10px 0 5px;
}
.view-tabs .active {
    border: 1px solid #5aa3dc;
    background: #fff;
}
.view-tabs button svg {
    width: 10px;
    height: 10px;
}
.view-nav {
    display: flex;
    gap: 4px;
    margin-left: auto;
    padding-right: 3px;
    color: #888;
}
.view-nav svg {
    width: 10px;
    height: 10px;
}

/* error list */
.errors {
    flex: none;
    margin-top: 4px;
    border: 1px solid #9aa0ac;
    background: #fff;
}
.errors-title {
    display: flex;
    align-items: center;
    gap: 8px;
    height: 17px;
    padding: 0 5px 0 4px;
    color: #44546f;
    background: linear-gradient(#bdd0e8, #dbe6f7);
}
.errors-title h2 {
    flex: 1;
}
.errors-title svg {
    width: 10px;
    height: 10px;
}
.errors-title .caret::before {
    border-top-color: #44546f;
}
.errors-bar {
    display: flex;
    align-items: center;
    height: 27px;
    padding-left: 4px;
    border-bottom: 1px solid #a4a9b8;
    background: linear-gradient(#f8f9ff, #e2e5f6 50%, #bfc5d8);
}
.errors-bar button {
    display: flex;
    align-items: center;
    gap: 1px;
    height: 22px;
    padding: 0 3px;
    border: 1px solid #5b9cc4;
    background: linear-gradient(#e4f3fc, #bfe2f5 50%, #a3d3ee);
}
.errors-bar svg {
    width: 16px;
    height: 16px;
}
.errors-bar span {
    width: 1px;
    height: 16px;
    margin: 0 3px 0 2px;
    background: #a9adbf;
}
.error-table {
    table-layout: fixed;
    width: 100%;
    border-collapse: collapse;
}
.error-table th {
    height: 23px;
    padding: 0 0 0 6px;
    border-right: 1px solid #e2e3e6;
    border-bottom: 1px solid #d5d5d9;
    font-weight: normal;
    text-align: left;
    background: linear-gradient(#fff 40%, #f1f1f3);
}
.error-table td {
    height: 20px;
    padding: 0;
    border-right: 1px solid #ebebee;
    border-bottom: 1px solid #ebebee;
}
.error-table th:last-child, .error-table td:last-child {
    border-right: 0;
}
.error-table tr:last-child td {
    height: 19px;
    border-bottom: 0;
}
.e-a {
    width: 17px;
}
.e-b {
    width: 19px;
}
.e-file {
    width: 120px;
}
.e-line {
    width: 70px;
}
.e-proj {
    width: 121px;
}
.tool-tabs {
    display: flex;
    align-items: flex-start;
    height: 24px;
    flex: none;
    margin-top: 2px;
    border-top: 1px solid #9c9ca2;
}
.tool-tabs button {
    display: flex;
    align-items: center;
    gap: 2px;
    height: 18px;
    padding: 0 3px;
    border: 1px solid #9c9ca2;
    border-top: 0;
    color: #5c5c66;
    background: #dddcdb;
}
.tool-tabs .active {
    height: 20px;
    color: #111;
    background: #fff;
}
.tool-tabs svg {
    width: 16px;
    height: 16px;
}

.statusbar {
    height: 21px;
    flex: none;
    padding: 3px 9px 0;
    line-height: 16px;
    border-top: 1px solid #8f8f8f;
    border-bottom: 1px solid #555866;
    background: #f0eeec;
}
```
